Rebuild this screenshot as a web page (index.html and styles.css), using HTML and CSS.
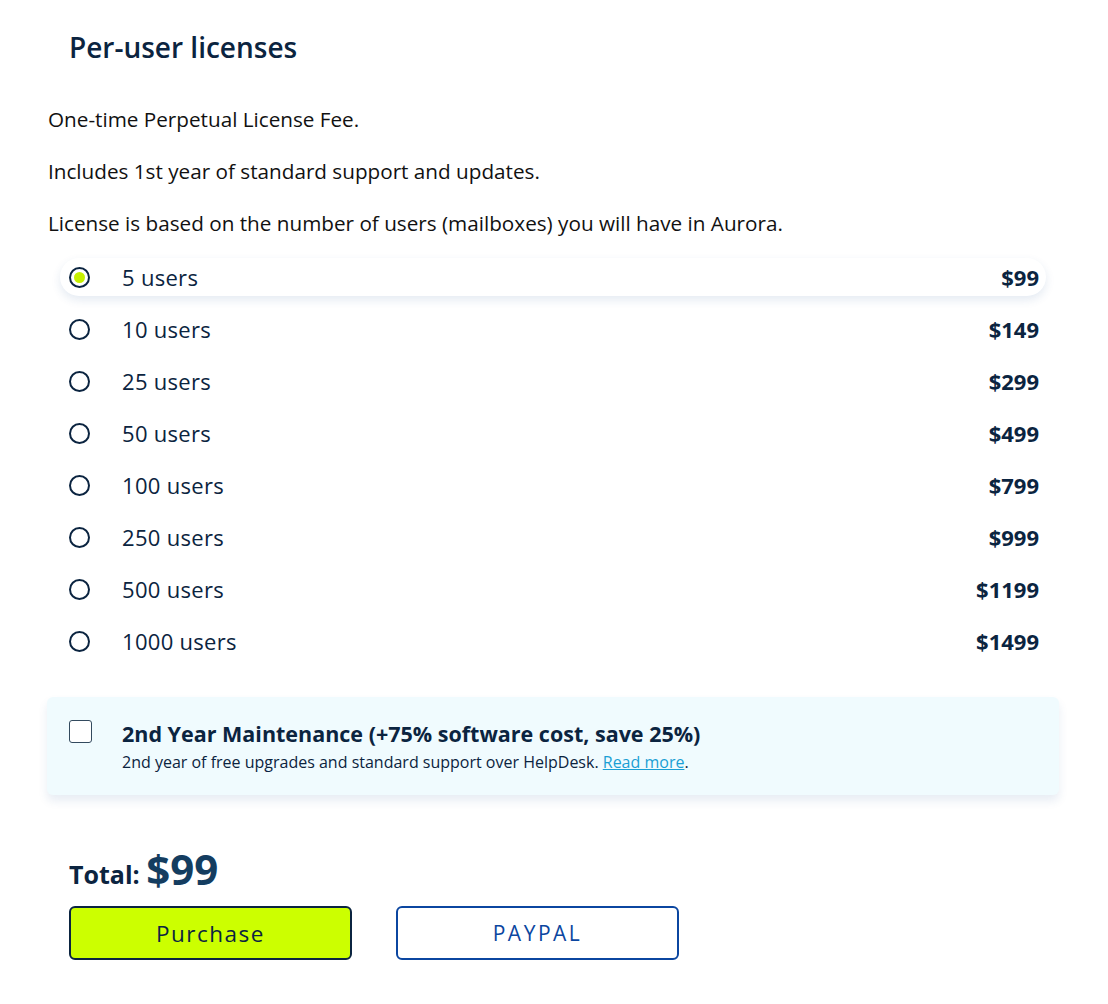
FILE: index.html
```html
<!DOCTYPE html>
<html lang="en">
<head>
    <meta charset="UTF-8">
    <meta name="viewport" content="width=device-width, initial-scale=1.0">
    <title>Per-user licenses</title>
    <link rel="stylesheet" href="styles.css">
</head>
<body>
    <div class="container">
        <h2 class="title">Per-user licenses</h2>
        <div class="intro">
            <p class="note">One-time Perpetual License Fee.</p>
            <p class="note">Includes 1st year of standard support and updates.</p>
            <p class="note">License is based on the number of users (mailboxes) you will have in Aurora.</p>
        </div>

        <div class="plans">
            <div class="plan active"><span class="radio"></span><span class="plan-name">5 users</span><span class="price">$99</span></div>
            <div class="plan"><span class="radio"></span><span class="plan-name">10 users</span><span class="price">$149</span></div>
            <div class="plan"><span class="radio"></span><span class="plan-name">25 users</span><span class="price">$299</span></div>
            <div class="plan"><span class="radio"></span><span class="plan-name">50 users</span><span class="price">$499</span></div>
            <div class="plan"><span class="radio"></span><span class="plan-name">100 users</span><span class="price">$799</span></div>
            <div class="plan"><span class="radio"></span><span class="plan-name">250 users</span><span class="price">$999</span></div>
            <div class="plan"><span class="radio"></span><span class="plan-name">500 users</span><span class="price">$1199</span></div>
            <div class="plan"><span class="radio"></span><span class="plan-name">1000 users</span><span class="price">$1499</span></div>
        </div>

        <div class="maintenance">
            <span class="checkbox"></span>
            <div class="maint-text">
                <div class="maint-title">2nd Year Maintenance (+75% software cost, save 25%)</div>
                <div class="maint-sub">2nd year of free upgrades and standard support over HelpDesk. <a href="#">Read more</a>.</div>
            </div>
        </div>

        <div class="total">Total: <span class="total-sum">$99</span></div>
        <div class="button-container">
            <button class="btn-purchase">Purchase</button>
            <button class="btn-paypal">PAYPAL</button>
        </div>
    </div>
</body>
</html>
```
FILE: styles.css
```css
body {
    margin: 0;
    background: #fff;
    font-family: "Open Sans", sans-serif;
    color: #0b2440;
}
.container {
    padding: 29px 49px 0 48px;
}
.title {
    margin: 0 0 40px 21px;
    font-size: 28px;
    font-weight: 600;
    line-height: 36px;
    color: #0b2440;
}
.intro {
    display: flex;
    flex-direction: column;
    gap: 24px;
    margin-bottom: 21px;
}
.note {
    margin: 0;
    font-size: 20.7px;
    line-height: 28px;
    color: #111;
}
.plans {
    display: flex;
    flex-direction: column;
    gap: 14px;
    margin: 0 13px 0 12px;
}
.plan {
    display: flex;
    align-items: center;
    height: 38px;
    padding: 0 7px 0 9px;
    border-radius: 19px;
    font-size: 22px;
    color: #0b2440;
}
.plan.active {
    background: #fff;
    box-shadow: 0 4px 10px rgba(30, 80, 150, 0.12);
}
.radio {
    width: 17px;
    height: 17px;
    border: 2px solid #0b2440;
    border-radius: 50%;
    margin-right: 32px;
    display: flex;
    align-items: center;
    justify-content: center;
}
.plan.active .radio::after {
    content: "";
    width: 11px;
    height: 11px;
    border-radius: 50%;
    background: #c6f000;
}
.plan-name {
    flex: 1;
    letter-spacing: 0.3px;
}
.price {
    font-weight: 700;
}
.maintenance {
    display: flex;
    align-items: flex-start;
    margin: 37px 0 0 -1px;
    padding: 23px 20px 22px 22px;
    background: #f0fbfe;
    border-radius: 6px;
    box-shadow: 0 6px 10px rgba(30, 80, 150, 0.10);
}
.checkbox {
    width: 21px;
    height: 21px;
    border: 1.5px solid #334a5e;
    border-radius: 3px;
    background: #fff;
    margin-right: 30px;
    flex-shrink: 0;
}
.maint-text {
    margin-top: 2px;
}
.maint-title {
    font-size: 21.5px;
    font-weight: 700;
    line-height: 24px;
}
.maint-sub {
    font-size: 16px;
    line-height: 22px;
    margin-top: 5px;
}
.maint-sub a {
    color: #1a9fd4;
}
.total {
    margin: 52px 0 0 21px;
    font-size: 25px;
    font-weight: 700;
    line-height: 44px;
    color: #0b2440;
}
.total-sum {
    font-size: 42px;
    color: #143d60;
    vertical-align: -1px;
}
.button-container {
    display: flex;
    gap: 44px;
    margin: 10px 0 0 21px;
}
button {
    width: 283px;
    height: 54px;
    border-radius: 6px;
    font-family: "Open Sans", sans-serif;
    font-size: 22.5px;
    cursor: pointer;
}
.btn-purchase {
    background: #ccff00;
    border: 2px solid #0b2440;
    color: #0b2440;
    letter-spacing: 1.5px;
}
.btn-paypal {
    background: #fff;
    border: 2px solid #0b46a0;
    color: #0b46a0;
    font-size: 21px;
    letter-spacing: 2.5px;
}
```
